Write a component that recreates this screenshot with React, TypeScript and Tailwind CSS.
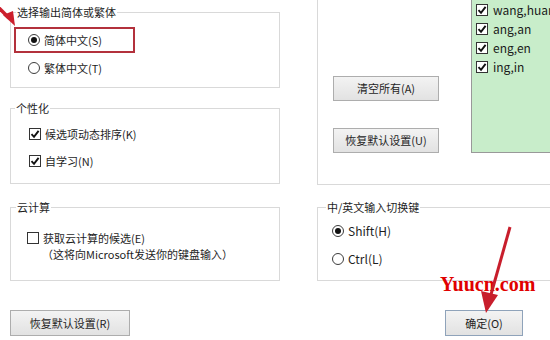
import React from "react";

const Radio = ({ checked }: { checked?: boolean }) => (
  <div className="w-[12px] h-[12px] rounded-full border border-[#3c3c3c] bg-white flex items-center justify-center shrink-0">
    {checked && <div className="w-[6px] h-[6px] rounded-full bg-[#111]" />}
  </div>
);

const Check = ({ checked }: { checked?: boolean }) => (
  <div className="w-[12px] h-[12px] border border-[#333] bg-white flex items-center justify-center shrink-0">
    {checked && (
      <svg width="10" height="10" viewBox="0 0 10 10">
        <path d="M1.5 5.2 L4 7.8 L8.6 1.8" fill="none" stroke="#111" strokeWidth="1.9" />
      </svg>
    )}
  </div>
);

const Btn = ({ label, cls }: { label: string; cls: string }) => (
  <div
    className={`flex items-center justify-center border bg-linear-to-b from-[#f3f3f3] to-[#e2e2e2] text-[11px] text-[#1e1e1e] ${cls}`}
  >
    {label}
  </div>
);

const Title = ({ text, cls }: { text: string; cls: string }) => (
  <span className={`absolute top-[-9px] bg-white px-[1px] leading-[16px] text-[11px] text-[#1e1e1e] ${cls}`}>
    {text}
  </span>
);

export default function App() {
  return (
    <div className="relative w-[550px] h-[340px] overflow-hidden bg-white flex font-['Noto_Sans_CJK_SC','Noto_Sans',sans-serif] text-[#1e1e1e]">
      {/* Left column */}
      <div className="ml-[10px] w-[270px] flex flex-col shrink-0">
        <div className="relative mt-[12px] h-[76px] border border-[#d9d9d9] flex flex-col pl-[17px] pt-[19px] gap-[12px]">
          <Title text="选择输出简体或繁体" cls="left-[5px]" />
          <div className="flex items-center gap-[4px] h-[16px] text-[11px]">
            <Radio checked />
            <span>简体中文(S)</span>
          </div>
          <div className="flex items-center gap-[4px] h-[16px] text-[11px]">
            <Radio />
            <span>繁体中文(T)</span>
          </div>
          <div className="absolute left-[3px] top-[14px] w-[121px] h-[26px] border-2 border-[#b3313c]" />
        </div>

        <div className="relative mt-[20px] h-[76px] border border-[#d9d9d9] flex flex-col pl-[18px] pt-[17px] gap-[11px]">
          <Title text="个性化" cls="left-[4px]" />
          <div className="flex items-center gap-[4px] h-[16px] text-[11px]">
            <Check checked />
            <span>候选项动态排序(K)</span>
          </div>
          <div className="flex items-center gap-[4px] h-[16px] text-[11px]">
            <Check checked />
            <span>自学习(N)</span>
          </div>
        </div>

        <div className="relative mt-[23px] h-[74px] border border-[#d9d9d9] flex flex-col pl-[16px] pt-[22px]">
          <Title text="云计算" cls="left-[5px]" />
          <div className="flex items-center gap-[4px] h-[16px] text-[11px]">
            <Check />
            <span>获取云计算的候选(E)</span>
          </div>
          <div className="pl-[15px] h-[17px] leading-[17px] text-[11px]">（这将向Microsoft发送你的键盘输入）</div>
        </div>

        <Btn label="恢复默认设置(R)" cls="mt-[29px] w-[120px] h-[26px] border-[#adadad]" />
      </div>

      {/* Right column */}
      <div className="ml-[37px] flex-1 flex flex-col min-w-0">
        <div className="h-[185px] border-l border-b border-[#d9d9d9] flex shrink-0">
          <div className="flex flex-col pl-[15px] pt-[76px] shrink-0">
            <Btn label="清空所有(A)" cls="w-[106px] h-[25px] border-[#adadad]" />
            <Btn label="恢复默认设置(U)" cls="mt-[27px] w-[106px] h-[25px] border-[#adadad]" />
          </div>
          <div className="ml-[32px] h-[153px] flex-1 border-l border-b border-[#999] bg-[#c8edca] flex flex-col pl-[4px] text-[12px] text-[#1a1a1a]">
            {["wang,huang", "ang,an", "eng,en", "ing,in"].map((t) => (
              <div key={t} className="h-[19px] flex items-center gap-[5px] whitespace-nowrap">
                <Check checked />
                <span>{t}</span>
              </div>
            ))}
          </div>
        </div>

        <div className="relative mt-[22px] h-[74px] border-l border-t border-b border-[#d9d9d9] flex flex-col pl-[14px] pt-[15px] gap-[12px] shrink-0">
          <Title text="中/英文输入切换键" cls="left-[8px]" />
          <div className="flex items-center gap-[4px] h-[16px] text-[12px]">
            <Radio checked />
            <span>Shift(H)</span>
          </div>
          <div className="flex items-center gap-[4px] h-[16px] text-[12px]">
            <Radio />
            <span>Ctrl(L)</span>
          </div>
        </div>

        <Btn label="确定(O)" cls="mt-[29px] ml-[128px] w-[78px] h-[26px] border-[#8fa3ba]" />
      </div>

      {/* Watermark */}
      <div className="absolute left-[440px] top-[274px] leading-none text-[20px] font-bold text-[#e00000] font-['Liberation_Serif',serif]">
        Yuucn.com
      </div>

      {/* Annotation arrows */}
      <svg className="absolute left-0 top-0 pointer-events-none" width="550" height="340" viewBox="0 0 550 340">
        <line x1="-3" y1="6" x2="9" y2="18" stroke="#cc1f2d" strokeWidth="3.5" />
        <polygon points="3,15 13,11 15,26" fill="#cc1f2d" />
        <line x1="510" y1="227" x2="490" y2="298" stroke="#c81e2c" strokeWidth="3" />
        <polygon points="481,291 498,295 486,313" fill="#c81e2c" />
      </svg>
    </div>
  );
}
